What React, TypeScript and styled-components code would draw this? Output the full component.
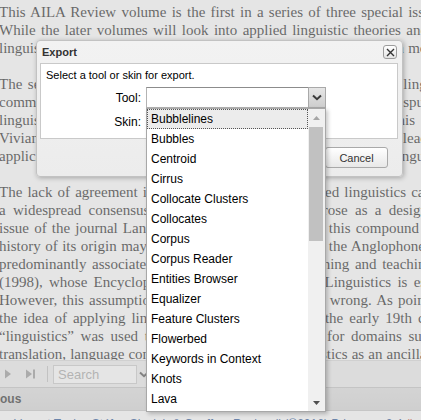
import React from "react";
import styled, { createGlobalStyle } from "styled-components";

const GlobalStyle = createGlobalStyle`
  html, body { margin: 0; padding: 0; background: #fff; overflow: hidden; }
  #root { width: 421px; height: 420px; }
`;

const Page = styled.div`
  position: relative;
  width: 421px;
  height: 420px;
  overflow: hidden;
  background: #fff;
  display: flex;
  flex-direction: column;
`;

const Article = styled.div`
  flex: 0 0 auto;
  height: 357px;
  padding-top: 3px;
  margin-left: -1px;
  overflow: hidden;
  font-family: "Liberation Serif", "Times New Roman", serif;
  font-size: 15px;
  line-height: 18px;
  color: #000;
`;

const Line = styled.div<{ $w: number }>`
  width: ${(p) => p.$w}px;
  height: 18px;
  overflow: hidden;
  text-align: justify;
  text-align-last: justify;
`;

const Blank = styled.div`
  height: 18px;
`;

const Toolbar = styled.div`
  flex: 0 0 28px;
  box-sizing: border-box;
  border-top: 1px solid #d4d4d4;
  border-bottom: 1px solid #bdbdbd;
  background: #ececec;
  display: flex;
  align-items: center;
  padding-left: 0;
`;

const ToolIcon = styled.span`
  width: 16px;
  height: 16px;
  display: flex;
  align-items: center;
  justify-content: center;
  margin-right: 6px;
`;

const ToolSep = styled.span`
  width: 1px;
  height: 16px;
  background: #b8b8b8;
  margin: 0 5px 0 3px;
`;

const SearchBox = styled.div`
  display: flex;
  height: 19px;
  box-sizing: border-box;
  width: 84px;
  border: 1px solid #c4c4c4;
  background: #fff;
  align-items: center;
  padding-left: 4px;
  font-family: "Liberation Sans", Arial, sans-serif;
  font-size: 13px;
  color: #9a9a9a;
`;

const SearchTrigger = styled.span`
  width: 14px;
  height: 19px;
  display: flex;
  align-items: center;
  justify-content: center;
`;

const PanelHeader = styled.div`
  flex: 0 0 23px;
  box-sizing: border-box;
  background: linear-gradient(#dcdcdc, #d2d2d2);
  border-bottom: 1px solid #c0c0c0;
  display: flex;
  align-items: center;
  font-family: "Liberation Sans", Arial, sans-serif;
  font-weight: bold;
  font-size: 12px;
  color: #111;
`;

const Footer = styled.div`
  flex: 1 1 auto;
  padding: 6px 0 0 14px;
  white-space: nowrap;
  font-family: "Liberation Sans", Arial, sans-serif;
  font-size: 12px;
  color: #0b3f8a;
`;

const Help = styled.span`
  color: #c43b1d;
`;

const Mask = styled.div`
  position: absolute;
  inset: 0;
  background: #ccc;
  opacity: 0.5;
`;

const Window = styled.div`
  position: absolute;
  left: 36px;
  top: 40px;
  width: 367px;
  height: 137px;
  box-sizing: border-box;
  background: linear-gradient(#f2f2f2, #ececec);
  border: 1px solid #c2c2c2;
  border-radius: 4px;
  box-shadow: 1px 1px 5px rgba(0, 0, 0, 0.28);
  padding: 0 4px 0 3px;
  display: flex;
  flex-direction: column;
  font-family: "Liberation Sans", Arial, sans-serif;
`;

const WinHeader = styled.div`
  height: 22px;
  display: flex;
  align-items: center;
  justify-content: space-between;
  padding: 0 1px 0 2px;
`;

const WinTitle = styled.span`
  font-weight: bold;
  font-size: 11px;
  color: #333;
`;

const CloseBtn = styled.span`
  width: 14px;
  height: 14px;
  box-sizing: border-box;
  border: 1px solid #9c9c9c;
  border-radius: 3px;
  background: linear-gradient(#ffffff, #e4e4e4);
  display: flex;
  align-items: center;
  justify-content: center;
`;

const WinBody = styled.div`
  height: 76px;
  box-sizing: border-box;
  background: #fff;
  border: 1px solid #c9c9c9;
  padding: 5px 5px 0;
  display: flex;
  flex-direction: column;
`;

const Intro = styled.div`
  font-size: 11px;
  line-height: 13px;
  color: #000;
  margin-bottom: 5px;
`;

const FormRow = styled.div`
  display: grid;
  grid-template-columns: 100px 180px;
  align-items: center;
  height: 21px;
  margin-bottom: 3px;
`;

const Label = styled.label`
  text-align: right;
  padding-right: 5px;
  font-size: 12px;
  color: #000;
`;

const Combo = styled.div`
  position: relative;
  display: flex;
  height: 21px;
`;

const ComboInput = styled.div`
  flex: 1 1 auto;
  box-sizing: border-box;
  background: #fff;
  border: 1px solid #b3b3b3;
  border-top-color: #8c8c8c;
  border-right: none;
`;

const ComboTrigger = styled.div`
  width: 18px;
  box-sizing: border-box;
  border: 1px solid #a9a9a9;
  background: linear-gradient(#e6e6e6, #cdcdcd);
  display: flex;
  align-items: center;
  justify-content: center;
`;

const DropList = styled.div`
  position: absolute;
  left: 0;
  top: 21px;
  width: 180px;
  height: 304px;
  box-sizing: border-box;
  background: #fff;
  border: 1px solid #a8a8a8;
  box-shadow: 2px 2px 4px rgba(0, 0, 0, 0.22);
  display: flex;
  z-index: 5;
`;

const Items = styled.div`
  flex: 1 1 auto;
  display: flex;
  flex-direction: column;
`;

const Item = styled.div<{ $active?: boolean }>`
  height: 20px;
  box-sizing: border-box;
  line-height: 18px;
  padding-left: 3px;
  font-size: 12px;
  color: #000;
  border: 1px ${(p) => (p.$active ? "dotted #555" : "solid transparent")};
  background: ${(p) => (p.$active ? "#ececec" : "transparent")};
`;

const ScrollBar = styled.div`
  width: 17px;
  background: #f0f0f0;
  display: flex;
  flex-direction: column;
`;

const ScrollBtn = styled.div`
  height: 17px;
  display: flex;
  align-items: center;
  justify-content: center;
`;

const ScrollTrack = styled.div`
  flex: 1 1 auto;
  padding: 1px 2px 0 1px;
`;

const Thumb = styled.div`
  height: 114px;
  background: #c1c1c1;
`;

const WinFooter = styled.div`
  flex: 1 1 auto;
  display: flex;
  justify-content: flex-end;
  align-items: flex-start;
  gap: 7px;
  padding: 8px 10px 0 0;
`;

const Button = styled.div`
  width: 63px;
  height: 21px;
  box-sizing: border-box;
  border: 1px solid #a9a9a9;
  border-radius: 3px;
  background: linear-gradient(#ffffff, #e8e8e8);
  display: flex;
  align-items: center;
  justify-content: center;
  font-size: 11px;
  color: #333;
`;

const lines: { t: string; w: number }[] = [
  { t: "This AILA Review volume is the first in a series of three special issues", w: 445 },
  { t: "While the later volumes will look into applied linguistic theories and", w: 429 },
  { t: "linguistics in the wider world, the present volume aims to do much more", w: 440 },
  { t: "", w: 0 },
  { t: "The second and third volumes will explore the scope of applied linguistics", w: 466 },
  { t: "community is reflecting on its identity and role, which has been a spur", w: 430 },
  { t: "linguistics has been shaped by many debates over the years, and this", w: 416 },
  { t: "Vivian Cook, Guy Cook and Henry Widdowson being among the leading", w: 448 },
  { t: "applications of the field, which are all in some way related to language", w: 446 },
  { t: "", w: 0 },
  { t: "The lack of agreement in defining the scope of applied linguistics can", w: 433 },
  { t: "a widespread consensus that the term linguistics arose as a designation", w: 459 },
  { t: "issue of the journal Language Learning in 1948, and this compound", w: 420 },
  { t: "history of its origin may be found in the 1950s era of the Anglophone", w: 426 },
  { t: "predominantly associated with foreign language learning and teaching", w: 434 },
  { t: "(1998), whose Encyclopedic Dictionary of Applied Linguistics is essentially", w: 478 },
  { t: "However, this assumption is now considered entirely wrong. As pointed", w: 444 },
  { t: "the idea of applying linguistics to teaching goes to the early 19th century", w: 464 },
  { t: "\u201Clinguistics\u201D was used there in a rather broad way for domains such", w: 437 },
  { t: "translation, language contact and dialects, with linguistics as an ancillary", w: 440 },
];

const tools = [
  "Bubblelines",
  "Bubbles",
  "Centroid",
  "Cirrus",
  "Collocate Clusters",
  "Collocates",
  "Corpus",
  "Corpus Reader",
  "Entities Browser",
  "Equalizer",
  "Feature Clusters",
  "Flowerbed",
  "Keywords in Context",
  "Knots",
  "Lava",
];

const Chevron = () => (
  <svg width="10" height="7" viewBox="0 0 10 7">
    <polyline points="1,1.5 5,5.2 9,1.5" fill="none" stroke="#3a3a3a" strokeWidth="2" />
  </svg>
);

export default function App() {
  return (
    <>
      <GlobalStyle />
      <Page>
        <Article>
          {lines.map((l, i) =>
            l.t ? (
              <Line key={i} $w={l.w}>
                {l.t}
              </Line>
            ) : (
              <Blank key={i} />
            )
          )}
        </Article>
        <Toolbar>
          <ToolIcon>
            <svg width="8" height="10" viewBox="0 0 8 10">
              <polygon points="1,0.5 7,5 1,9.5" fill="#8a8a8a" />
            </svg>
          </ToolIcon>
          <ToolIcon>
            <svg width="11" height="10" viewBox="0 0 11 10">
              <polygon points="1,0.5 7,5 1,9.5" fill="#8a8a8a" />
              <rect x="8" y="0.5" width="2" height="9" fill="#8a8a8a" />
            </svg>
          </ToolIcon>
          <ToolSep />
          <SearchBox>Search</SearchBox>
          <SearchTrigger>
            <Chevron />
          </SearchTrigger>
        </Toolbar>
        <PanelHeader>ous</PanelHeader>
        <Footer>
          Voyant Tools , Stéfan Sinclair &amp; Geoffrey Rockwell (©2016) Privacy v. 2.4 <Help>(help)</Help> (4000)
        </Footer>
        <Mask />
        <Window>
          <WinHeader>
            <WinTitle>Export</WinTitle>
            <CloseBtn>
              <svg width="9" height="9" viewBox="0 0 9 9">
                <path d="M1 1 L8 8 M8 1 L1 8" stroke="#333" strokeWidth="1.4" />
              </svg>
            </CloseBtn>
          </WinHeader>
          <WinBody>
            <Intro>Select a tool or skin for export.</Intro>
            <FormRow>
              <Label>Tool:</Label>
              <Combo>
                <ComboInput />
                <ComboTrigger>
                  <Chevron />
                </ComboTrigger>
                <DropList>
                  <Items>
                    {tools.map((t, i) => (
                      <Item key={t} $active={i === 0}>
                        {t}
                      </Item>
                    ))}
                  </Items>
                  <ScrollBar>
                    <ScrollBtn>
                      <svg width="7" height="4" viewBox="0 0 7 4">
                        <polygon points="0,4 3.5,0 7,4" fill="#a6a6a6" />
                      </svg>
                    </ScrollBtn>
                    <ScrollTrack>
                      <Thumb />
                    </ScrollTrack>
                    <ScrollBtn>
                      <svg width="7" height="4" viewBox="0 0 7 4">
                        <polygon points="0,0 3.5,4 7,0" fill="#505050" />
                      </svg>
                    </ScrollBtn>
                  </ScrollBar>
                </DropList>
              </Combo>
            </FormRow>
            <FormRow>
              <Label>Skin:</Label>
              <Combo>
                <ComboInput />
                <ComboTrigger>
                  <Chevron />
                </ComboTrigger>
              </Combo>
            </FormRow>
          </WinBody>
          <WinFooter>
            <Button>Export</Button>
            <Button>Cancel</Button>
          </WinFooter>
        </Window>
      </Page>
    </>
  );
}
